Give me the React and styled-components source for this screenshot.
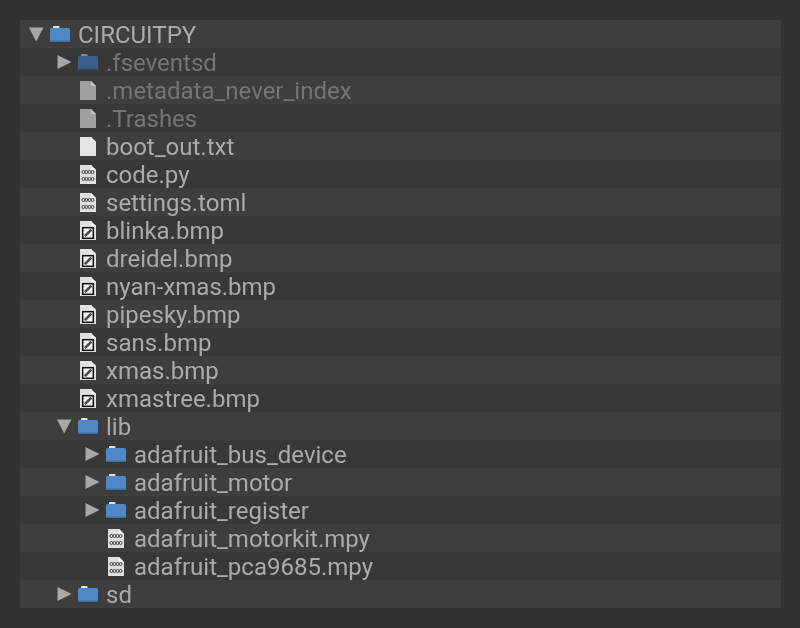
import React from 'react';
import styled, { createGlobalStyle } from 'styled-components';

const GlobalStyle = createGlobalStyle`
  html, body {
    margin: 0;
    padding: 0;
    background: #323232;
  }
`;

const Page = styled.div`
  width: 800px;
  height: 628px;
  padding: 20px 19px 20px 20px;
  box-sizing: border-box;
  background: #323232;
  font-family: Roboto, "Liberation Sans", sans-serif;
`;

const Tree = styled.div`
  display: flex;
  flex-direction: column;
`;

const Row = styled.div`
  display: flex;
  align-items: center;
  height: 28px;
  padding-left: ${p => p.$depth * 28 + 8}px;
  background: ${p => (p.$odd ? '#3e3e3e' : '#383838')};
`;

const ArrowSlot = styled.div`
  width: 22px;
  height: 28px;
  display: flex;
  align-items: center;
  justify-content: flex-start;
  flex-shrink: 0;
`;

const IconSlot = styled.div`
  width: 28px;
  height: 28px;
  display: flex;
  align-items: center;
  flex-shrink: 0;
  filter: blur(0.35px);
  padding-left: ${p => (p.$file ? 2 : 0)}px;
  box-sizing: border-box;
`;

const Label = styled.span`
  font-size: 24px;
  line-height: 28px;
  padding-top: 2px;
  white-space: nowrap;
  filter: blur(0.3px);
  color: ${p => (p.$dim ? '#757575' : '#ababab')};
`;

const Arrow = ({ open }) => (
  <svg width="16" height="16" viewBox="0 0 16 16">
    {open
      ? <path d="M1 1.5 H15.5 L8.2 15.5 Z" fill="#a8a8a8" />
      : <path d="M1.5 1 L15.5 8 L1.5 15 Z" fill="#a8a8a8" />}
  </svg>
);

const Folder = ({ dim }) => (
  <svg width="20" height="16" viewBox="0 0 20 16">
    <path d="M3 1 Q3 0 4 0 H8.5 Q9.5 0 9.5 1 V3 H3 Z" fill={dim ? '#8a8a8a' : '#e2e2e2'} />
    <rect x="0" y="2" width="20" height="14" rx="1.5" fill={dim ? '#3a5f88' : '#5088c6'} />
    <rect x="0" y="14.5" width="20" height="1.5" rx="0.7" fill={dim ? '#2f4c6d' : '#3f6ea6'} />
  </svg>
);

const sheet = 'M0 0 H11 L16 5 V19 H0 Z';

const PlainFile = ({ dim }) => (
  <svg width="16" height="19" viewBox="0 0 16 19">
    <path d={sheet} fill={dim ? '#a0a0a0' : '#e4e4e4'} />
    <path d="M11 0 L16 5 H11 Z" fill={dim ? '#c4c4c4' : '#f8f8f8'} />
  </svg>
);

const Loops = ({ y }) => (
  <g fill="none" stroke="#4a4a4a" strokeWidth="1">
    <ellipse cx="3.3" cy={y} rx="1.4" ry="1.6" />
    <ellipse cx="6.4" cy={y} rx="1.4" ry="1.6" />
    <ellipse cx="9.5" cy={y} rx="1.4" ry="1.6" />
    <ellipse cx="12.6" cy={y} rx="1.4" ry="1.6" />
  </g>
);

const CodeFile = () => (
  <svg width="16" height="19" viewBox="0 0 16 19">
    <path d={sheet} fill="#e0e0e0" />
    <path d="M11 0 L16 5 H11 Z" fill="#f8f8f8" />
    <Loops y={7} />
    <Loops y={14} />
  </svg>
);

const ImageFile = () => (
  <svg width="16" height="19" viewBox="0 0 16 19">
    <path d={sheet} fill="#e0e0e0" />
    <path d="M11 0 L16 5 H11 Z" fill="#f8f8f8" />
    <rect x="2.7" y="6.7" width="10.6" height="10.6" fill="#f2f2f2" stroke="#111" strokeWidth="1.5" />
    <path d="M4.8 15.2 L11.4 8.6" stroke="#4a4a4a" strokeWidth="2.6" />
  </svg>
);

const entries = [
  { depth: 0, arrow: 'open', icon: 'folder', name: 'CIRCUITPY' },
  { depth: 1, arrow: 'closed', icon: 'folder', name: '.fseventsd', dim: true },
  { depth: 1, icon: 'file', name: '.metadata_never_index', dim: true },
  { depth: 1, icon: 'file', name: '.Trashes', dim: true },
  { depth: 1, icon: 'file', name: 'boot_out.txt' },
  { depth: 1, icon: 'code', name: 'code.py' },
  { depth: 1, icon: 'code', name: 'settings.toml' },
  { depth: 1, icon: 'image', name: 'blinka.bmp' },
  { depth: 1, icon: 'image', name: 'dreidel.bmp' },
  { depth: 1, icon: 'image', name: 'nyan-xmas.bmp' },
  { depth: 1, icon: 'image', name: 'pipesky.bmp' },
  { depth: 1, icon: 'image', name: 'sans.bmp' },
  { depth: 1, icon: 'image', name: 'xmas.bmp' },
  { depth: 1, icon: 'image', name: 'xmastree.bmp' },
  { depth: 1, arrow: 'open', icon: 'folder', name: 'lib' },
  { depth: 2, arrow: 'closed', icon: 'folder', name: 'adafruit_bus_device' },
  { depth: 2, arrow: 'closed', icon: 'folder', name: 'adafruit_motor' },
  { depth: 2, arrow: 'closed', icon: 'folder', name: 'adafruit_register' },
  { depth: 2, icon: 'code', name: 'adafruit_motorkit.mpy' },
  { depth: 2, icon: 'code', name: 'adafruit_pca9685.mpy' },
  { depth: 1, arrow: 'closed', icon: 'folder', name: 'sd' },
];

function EntryIcon({ kind, dim }) {
  if (kind === 'folder') return <Folder dim={dim} />;
  if (kind === 'code') return <CodeFile />;
  if (kind === 'image') return <ImageFile />;
  return <PlainFile dim={dim} />;
}

export default function App() {
  return (
    <Page>
      <GlobalStyle />
      <Tree>
        {entries.map((entry, index) => (
          <Row key={entry.name} $depth={entry.depth} $odd={index % 2 === 0}>
            <ArrowSlot>
              {entry.arrow && <Arrow open={entry.arrow === 'open'} />}
            </ArrowSlot>
            <IconSlot $file={entry.icon !== 'folder'}>
              <EntryIcon kind={entry.icon} dim={entry.dim} />
            </IconSlot>
            <Label $dim={entry.dim}>{entry.name}</Label>
          </Row>
        ))}
      </Tree>
    </Page>
  );
}
